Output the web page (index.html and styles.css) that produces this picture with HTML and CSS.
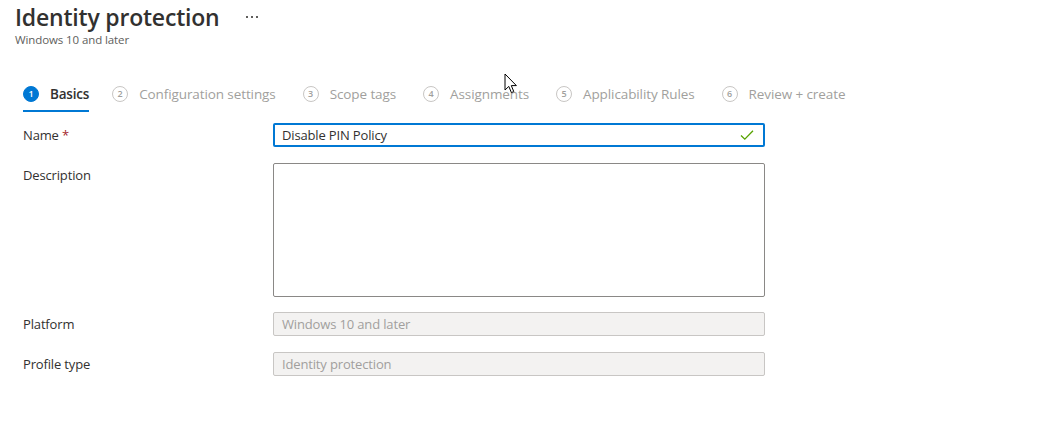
FILE: index.html
```html
<!DOCTYPE html>
<html>
<head>
<meta charset="utf-8">
<link rel="stylesheet" href="styles.css">
</head>
<body>
<div class="page">
  <header class="header">
    <div class="title-row">
      <h1 class="title">Identity protection</h1>
      <span class="more"><i></i><i></i><i></i></span>
    </div>
    <div class="subtitle">Windows 10 and later</div>
  </header>

  <nav class="tabs">
    <div class="tab active"><span class="num">1</span><span class="label">Basics</span></div>
    <div class="tab"><span class="num">2</span><span class="label">Configuration settings</span></div>
    <div class="tab"><span class="num">3</span><span class="label">Scope tags</span></div>
    <div class="tab"><span class="num">4</span><span class="label">Assignments</span></div>
    <div class="tab"><span class="num">5</span><span class="label">Applicability Rules</span></div>
    <div class="tab"><span class="num">6</span><span class="label">Review + create</span></div>
  </nav>

  <form class="form">
    <label class="field-label">Name <span class="req">*</span></label>
    <div class="input focused">
      <span class="value">Disable PIN Policy</span>
      <svg class="check" width="14" height="12" viewBox="0 0 14 12"><path d="M1 6.5 L4.8 10.2 L13 1.8" fill="none" stroke="#57a300" stroke-width="1.3"/></svg>
    </div>

    <label class="field-label row-shift">Description</label>
    <div class="textarea row-shift"></div>

    <label class="field-label">Platform</label>
    <div class="input disabled"><span class="value">Windows 10 and later</span></div>

    <label class="field-label row-shift">Profile type</label>
    <div class="input disabled row-shift"><span class="value">Identity protection</span></div>
  </form>

  <svg class="cursor" width="14" height="22" viewBox="0 0 14 22"><path d="M1 1 L1 17 L4.8 13.4 L7.4 19.6 L9.8 18.6 L7.3 12.6 L12.4 12.6 Z" fill="#fff" stroke="#000" stroke-width="1" stroke-linejoin="miter"/></svg>
</div>
</body>
</html>
```

FILE: styles.css
```css
* { box-sizing: border-box; }
html, body { margin: 0; padding: 0; background: #fff; }
body {
  font-family: "Open Sans", "Noto Sans", "Liberation Sans", sans-serif;
  color: #323130;
  width: 1044px;
  height: 439px;
  overflow: hidden;
}
.page { position: relative; height: 100%; }

.header { padding: 2px 0 0 15px; }
.title-row { display: flex; align-items: center; }
.title {
  margin: 0;
  font-size: 23px;
  font-weight: 600;
  line-height: 30px;
  letter-spacing: -0.2px;
  color: #323130;
}
.more { display: flex; gap: 3px; margin-left: 26px; }
.more i { display: block; width: 2px; height: 2px; background: #605e5c; }
.subtitle {
  font-size: 11.5px;
  line-height: 16px;
  color: #605e5c;
  letter-spacing: -0.1px;
}

.tabs {
  display: flex;
  margin: 29px 0 0 23px;
  gap: 27px;
}
.tab {
  display: flex;
  align-items: center;
  height: 35px;
  border-bottom: 2px solid transparent;
  color: #a19f9d;
  font-size: 13.5px;
  letter-spacing: -0.1px;
}
.tab.active {
  border-bottom-color: #0078d4;
  color: #323130;
  font-weight: 600;
  letter-spacing: -0.2px;
  margin-right: -4px;
}
.num {
  width: 16px;
  height: 16px;
  border-radius: 50%;
  border: 1px solid #c8c6c4;
  font-size: 9px;
  font-weight: 600;
  display: flex;
  align-items: center;
  justify-content: center;
  margin-right: 11px;
  color: #a19f9d;
  letter-spacing: 0;
}
.tab.active .num { background: #0078d4; border-color: #0078d4; color: #fff; }

.form {
  display: grid;
  grid-template-columns: 250px 492px;
  row-gap: 15px;
  margin: 11px 0 0 23px;
}
.row-shift { margin-top: 1px; }
.field-label {
  font-size: 13px;
  line-height: 24px;
  color: #323130;
  letter-spacing: -0.15px;
}
.req { color: #a4262c; }
.input {
  height: 24px;
  border: 1px solid #8a8886;
  border-radius: 2px;
  display: flex;
  align-items: center;
  padding: 0 8px;
  font-size: 13px;
  letter-spacing: -0.15px;
}
.input.focused { border: 2px solid #0078d4; padding: 0 7px; color: #323130; }
.input .value { flex: 1; }
.check { margin-right: 2px; }
.textarea {
  height: 134px;
  border: 1px solid #8a8886;
  border-radius: 2px;
}
.input.disabled {
  background: #f3f2f1;
  border-color: #c8c6c4;
  color: #a19f9d;
}

.cursor { position: absolute; left: 504px; top: 73px; }
```
